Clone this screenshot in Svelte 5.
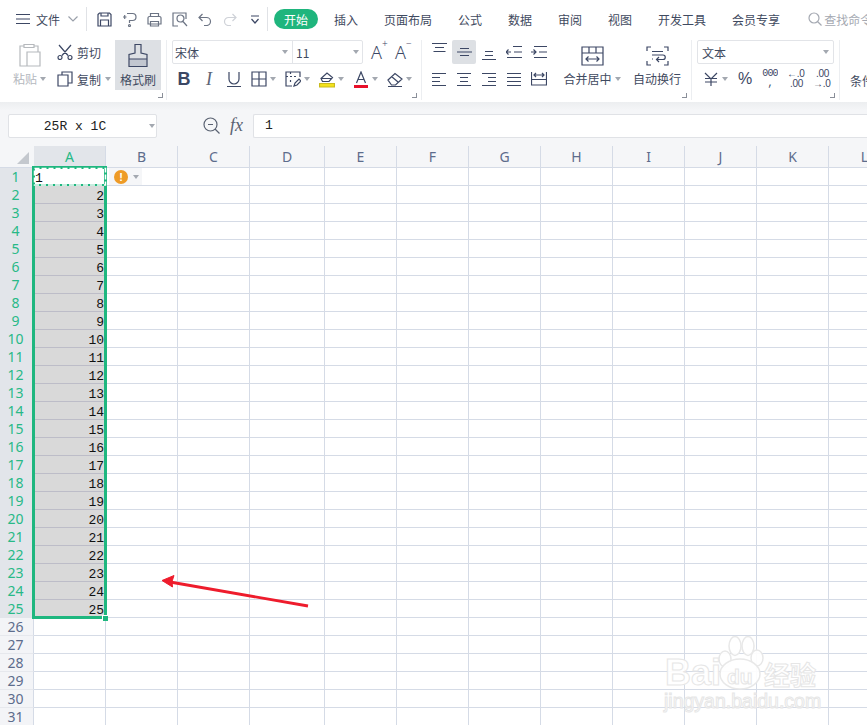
<script>
  const widths = [72, 72, 72, 75, 72, 72, 72, 72, 72, 72, 72, 72];
  const letters = 'ABCDEFGHIJKL'.split('');
  const rows = Array.from({ length: 31 }, (_, i) => i + 1);
  const tabs = ['插入', '页面布局', '公式', '数据', '审阅', '视图', '开发工具', '会员专享'];
</script>

<div class="app">
  <header class="tabs">
    <svg class="ham" width="14" height="12" viewBox="0 0 14 12"><path d="M0 1.500h14M0 6h14M0 10.500h14" /></svg>
    <span class="file">文件</span>
    <svg class="chev" width="10" height="6" viewBox="0 0 10 6"><path d="M.5.5 5 5 9.500.5" /></svg>
    <i class="tsep"></i>
    <div class="quick">
      <span class="q"><svg width="15" height="15" viewBox="0 0 15 15"><path d="M1 2.500 2.500 1h10L14 2.500V14H1zM3.500 14V8h8v6M4 1v3h7V1" /></svg></span>
      <span class="q"><svg width="15" height="15" viewBox="0 0 15 15" class="soft"><path d="M1 5h3.500M2.700 3v4M5 1.500h5.500a3.500 3.500 0 0 1 0 7H7.500v2.500M6.500 13.500a1 1 0 1 0 2 0 1 1 0 1 0-2 0" /></svg></span>
      <span class="q"><svg width="15" height="15" viewBox="0 0 15 15" class="soft"><path d="M3.500 4.500V1.500h8v3M1 12V6a1.500 1.500 0 0 1 1.500-1.500h10A1.500 1.500 0 0 1 14 6v6zM3.500 9.500h8V14h-8z" /></svg></span>
      <span class="q"><svg width="16" height="15" viewBox="0 0 16 15" class="soft"><path d="M6 14H1V1h13v6M5 6.500a3.500 3.500 0 1 0 7 0 3.500 3.500 0 1 0-7 0M11 9.500l4 4.500" /></svg></span>
      <span class="q"><svg width="14" height="13" viewBox="0 0 14 13" class="soft"><path d="M4.500 1 1 4.500 4.500 8M1 4.500h7.500a4 4 0 0 1 0 8H6" /></svg></span>
      <span class="q"><svg width="14" height="13" viewBox="0 0 14 13" class="faint"><path d="M9.500 1 13 4.500 9.500 8M13 4.500H5.500a4 4 0 0 0 0 8H8" /></svg></span>
      <span class="q"><svg width="10" height="9" viewBox="0 0 10 9"><path d="M1 1h8M1.500 4 5 8l3.500-4" /></svg></span>
    </div>
    <i class="tsep s2"></i>
    <span class="pill">开始</span>
    <nav>
      {#each tabs as t}<span>{t}</span>{/each}
    </nav>
    <div class="find">
      <svg width="14" height="14" viewBox="0 0 14 14"><path d="M1 6a5 5 0 1 0 10 0 5 5 0 1 0-10 0M9.500 9.500 13.500 13.500" /></svg>
      <span>查找命令</span>
    </div>
  </header>

  <section class="ribbon">
    <div class="grp g1">
      <div class="paste">
        <svg width="22" height="24" viewBox="0 0 22 24"><path d="M5 3H1v20h7M15 3h4v6M5 1.500h10v3H5zM8 9h13v14H8z" /></svg>
        <div class="dim">粘贴<b class="caret"></b></div>
      </div>
      <div class="cc">
        <div class="ccr">
          <svg width="16" height="16" viewBox="0 0 16 16"><path d="M2 1 11 11.500M14 1 5 11.500M1 13.500a2 2 0 1 0 4 0 2 2 0 1 0-4 0M11 13.500a2 2 0 1 0 4 0 2 2 0 1 0-4 0" /></svg>
          <span>剪切</span>
        </div>
        <div class="ccr">
          <svg width="16" height="16" viewBox="0 0 16 16"><path d="M5 4V1h10v11h-4M1 4h10v11H1z" /></svg>
          <span>复制</span><b class="caret"></b>
        </div>
      </div>
      <div class="brush">
        <svg width="20" height="25" viewBox="0 0 20 25"><path class="f" d="M1.500 16h17v8h-17z" /><path d="M7 10V1.500h6V10l6 1.500v12H1v-12zM1 16h18" /></svg>
        <span>格式刷</span>
      </div>
      <i class="launch"></i>
    </div>

    <div class="grp g2">
      <div class="row1">
        <div class="fontbox">
          <div class="ff"><span>宋体</span><b class="caret"></b></div>
          <div class="fs"><span>11</span><b class="caret"></b></div>
        </div>
        <span class="grow">A<sup>+</sup></span>
        <span class="grow">A<sup>−</sup></span>
      </div>
      <div class="row2 fmt">
        <span class="bold">B</span>
        <span class="ital">I</span>
        <svg width="16" height="16" viewBox="0 0 16 16"><path d="M3 1v7a5 5 0 0 0 10 0V1M1 15.500h14" /></svg>
        <svg width="16" height="16" viewBox="0 0 16 16"><path d="M1 1h14v14H1zM8 1v14M1 8h14" /></svg><b class="caret"></b>
        <svg width="16" height="16" viewBox="0 0 16 16"><path d="M15 6V1H1v14h6M1 5.500h2M5 5.500h2M9 5.500h2M5.500 1v2M5.500 9v2M9 15l1-3 4-4 2 2-4 4z" /></svg><b class="caret"></b>
        <svg width="16" height="17" viewBox="0 0 16 17"><path d="M2 7.500 8 2l5.500 4.500L10 10.500H3.500zM2 7.500h11" /><path class="y" d="M.5 12.500h15V16H.5z" /></svg><b class="caret"></b>
        <svg width="16" height="17" viewBox="0 0 16 17"><path d="M3.500 12 8 1l4.500 11M5 8.500h6" /><path class="r" d="M1 14h14v3H1z" /></svg><b class="caret"></b>
        <svg width="16" height="16" viewBox="0 0 16 16"><path d="M1 9 8 2.500 15 8l-6.500 6H4.500zM4.500 5.500 11 11M1 15.500h14" /></svg><b class="caret"></b>
      </div>
      <i class="launch"></i>
    </div>

    <div class="grp g3">
      <div class="aligns">
        <span><svg class="hi" width="15" height="12" viewBox="0 0 15 12"><path d="M0 .5h15M3 4.500h9M1.500 8.500h12" /></svg></span>
        <span class="on"><svg width="15" height="8" viewBox="0 0 15 8"><path d="M3 .5h9M0 4h15M3 7.500h9" /></svg></span>
        <span><svg width="14" height="12" viewBox="0 0 14 12" class="low"><path d="M3 3.500h8M3 7.500h8M0 11.500h14" /></svg></span>
        <span><svg width="16" height="12" viewBox="0 0 16 12"><path d="M0 6h5M2.500 3.500 0 6l2.500 2.500M7 .5h9M8 6h8M1 11.500h15" /></svg></span>
        <span><svg width="16" height="12" viewBox="0 0 16 12"><path d="M0 6h5M2.500 3.500 5 6 2.500 8.500M3 .5h13M8 6h8M3 11.500h13" /></svg></span>
        <span><svg width="14" height="13" viewBox="0 0 14 13"><path d="M0 .5h14M0 4.500h8M0 8.500h8M0 12.500h14" /></svg></span>
        <span><svg width="14" height="13" viewBox="0 0 14 13"><path d="M0 .5h14M3 4.500h8M3 8.500h8M0 12.500h14" /></svg></span>
        <span><svg width="14" height="13" viewBox="0 0 14 13"><path d="M0 .5h14M6 4.500h8M6 8.500h8M0 12.500h14" /></svg></span>
        <span><svg width="14" height="13" viewBox="0 0 14 13"><path d="M0 .5h14M0 4.500h14M0 8.500h14M0 12.500h14" /></svg></span>
        <span><svg width="16" height="14" viewBox="0 0 16 14"><path d="M.5 0v13.500M15.500 0v13.500M.5 13h15M.5 7.500h15M3 3h10M5 1 3 3l2 2M11 1l2 2-2 2" /></svg></span>
      </div>
      <div class="big merge">
        <svg width="23" height="20" viewBox="0 0 23 20"><path d="M1 1h21v18H1zM1 7h21M8 1v6M15 1v6M5 13h13M7.500 10.500 5 13l2.500 2.500M15.500 10.500 18 13l-2.500 2.500" /></svg>
        <div>合并居中<b class="caret"></b></div>
      </div>
      <div class="big wrap">
        <svg width="23" height="20" viewBox="0 0 23 20"><path d="M5 1H1v4M18 1h4v4M5 19H1v-4M18 19h4v-4M6 5.500h11M6 9h11a1.500 1.500 0 0 1 0 4.500h-6M13 11l-2.500 2.500L13 16M6 13h1" /></svg>
        <div>自动换行</div>
      </div>
      <i class="launch"></i>
    </div>

    <div class="grp g4">
      <div class="numbox"><span>文本</span><b class="caret"></b></div>
      <div class="nums">
        <svg class="yen" width="14" height="14" viewBox="0 0 14 14"><path d="M1 1l6 6 6-6M7 7v7M1 6.500h12M1 10h12" /></svg><b class="caret"></b>
        <span class="pct">%</span>
        <span class="thou"><em>000</em><em>,</em></span>
        <span class="dec"><em>←.0</em><em>.00</em></span>
        <span class="dec"><em>.00</em><em>→.0</em></span>
      </div>
      <i class="launch"></i>
    </div>

    <div class="grp g5"><span>条件</span></div>
  </section>

  <div class="strip"></div>

  <section class="formula">
    <div class="name"><span>25R x 1C</span><b class="caret"></b></div>
    <svg class="zoomi" width="17" height="17" viewBox="0 0 17 17"><path d="M1 7.500a6.500 6.500 0 1 0 13 0 6.500 6.500 0 1 0-13 0M12 12l4.500 4.500M5 7.500h5" /></svg>
    <span class="fx">fx</span>
    <div class="input">1</div>
  </section>

  <section class="sheet">
    <div class="hrow">
      <div class="corner"><i></i></div>
      {#each letters as l, i}
        <div class="ch" class:act={i === 0} style="width:{widths[i]}px">{l}</div>
      {/each}
    </div>
    {#each rows as r}
      <div class="drow">
        <div class="rh" class:act={r <= 25}>{r}</div>
        {#each widths as w, i}
          <div class="cell" class:sel={i === 0 && r > 1 && r <= 25} class:first={i === 0 && r === 1} style="width:{w}px">
            {#if i === 0 && r <= 25}{r}{/if}
          </div>
        {/each}
      </div>
    {/each}

    <div class="selection">
      <svg width="75" height="22" viewBox="0 0 75 22">
        <path class="ant-base" d="M2.500 19h71" />
        <rect x="2.500" y="2.500" width="71" height="16.500" class="dash" />
      </svg>
      <i class="handle"></i>
    </div>

    <div class="smart">
      <span class="warn">!</span><b class="caret"></b>
    </div>

    <svg class="arrow" width="160" height="40" viewBox="0 0 160 40">
      <path class="shaft" d="M150 31 12 7" />
      <path class="head" d="M4 5.500 16 .5l-2 6 .5 5.500z" />
    </svg>

    <svg class="mark" width="170" height="90" viewBox="0 0 170 90">
      <g class="paw">
        <ellipse cx="75" cy="16" rx="6" ry="9.500" />
        <ellipse cx="88" cy="16" rx="6" ry="9.500" />
        <ellipse cx="65" cy="29" rx="6" ry="8" />
        <ellipse cx="97" cy="28" rx="6" ry="8" />
        <ellipse cx="80" cy="44" rx="20" ry="15" />
      </g>
      <text x="5" y="55" class="t1">Bai</text>
      <text x="67" y="54" class="t2">du</text>
      <text x="104" y="55" class="t3">经验</text>
      <text x="4" y="78" class="t4">jingyan.baidu.com</text>
    </svg>
  </section>
</div>

<style>
  :global(body) { margin: 0; background: #fff; }
  .app {
    width: 867px; height: 725px; overflow: hidden; position: relative;
    font-family: "Noto Sans CJK SC", "Noto Sans", sans-serif;
    font-size: 12px; color: #3f4a60; background: #fff;
  }
  svg path, svg rect { fill: none; stroke: #3c4764; stroke-width: 1.200; }
  .caret {
    display: inline-block; width: 0; height: 0; vertical-align: middle; flex: none;
    border: 3px solid transparent; border-top: 4px solid #a3a8b0; border-bottom: 0;
  }

  .tabs { height: 38px; display: flex; align-items: center; padding-left: 16px; box-sizing: border-box; overflow: hidden; }
  .file { margin-left: 6px; width: 24px; flex: none; white-space: nowrap; }
  .chev { margin-left: 8px; flex: none; }
  .ham { flex: none; }
  .chev path { stroke: #9aa0aa; }
  .tsep { width: 1px; height: 24px; background: #e0e2e6; margin-left: 8px; flex: none; }
  .tsep.s2 { margin-left: 0; }
  .quick { display: flex; margin-left: 5px; flex: none; }
  .q { width: 25px; height: 20px; display: flex; align-items: center; justify-content: center; }
  .soft path { stroke: #6c7484; }
  .faint path { stroke: #cfd2d8; }
  .pill {
    margin-left: 6px; width: 44px; height: 20px; border-radius: 10px; background: #1fb57d; flex: none;
    color: #fff; display: flex; align-items: center; justify-content: center;
  }
  nav { display: flex; gap: 26px; margin-left: 16px; white-space: nowrap; flex: none; }
  .find { display: flex; align-items: center; gap: 2px; margin-left: 28px; color: #a5a9b2; white-space: nowrap; flex: none; }
  .find path { stroke: #a5a9b2; }

  .ribbon { height: 64px; display: flex; padding-top: 2px; box-sizing: border-box; }
  .grp { position: relative; border-right: 1px solid #eceef1; box-sizing: content-box; height: 60px; flex: none; }
  .launch {
    position: absolute; right: 4px; bottom: 2px; width: 4px; height: 4px;
    border-right: 1px solid #8a8f99; border-bottom: 1px solid #8a8f99;
  }

  .g1 { width: 166px; display: flex; }
  .paste { width: 57px; padding-left: 13px; box-sizing: border-box; color: #b4b8be; }
  .paste svg { display: block; margin: 3px 0 0 6px; }
  .paste svg path { stroke: #b6b9bd; }
  .dim { margin-top: 3px; white-space: nowrap; display: flex; align-items: center; gap: 3px; }
  .cc { width: 58px; }
  .ccr { height: 24px; display: flex; align-items: center; gap: 4px; margin-bottom: 3px; }
  .brush {
    width: 46px; height: 50px; background: #dde0e4; display: flex; flex-direction: column; align-items: center;
  }
  .brush svg { margin-top: 3px; }
  .brush path.f { fill: #c2c7d0; stroke: none; }
  .brush span { margin-top: 2px; line-height: 20px; }
  .g1 .launch { right: 3px; }

  .g2 { width: 254px; }
  .row1 { display: flex; align-items: center; height: 24px; }
  .fontbox {
    margin-left: 5px; width: 191px; height: 24px; box-sizing: border-box; border: 1px solid #e2e4e8; border-radius: 2px;
    display: flex; font-size: 12px;
  }
  .ff { width: 120px; border-right: 1px solid #e2e4e8; display: flex; align-items: center; justify-content: space-between; padding: 0 4px 0 2px; box-sizing: border-box; }
  .fs { flex: 1; display: flex; align-items: center; justify-content: space-between; padding: 0 3px 0 3px; }
  .grow { font-family: "Noto Sans", sans-serif; font-size: 18px; width: 24px; line-height: 24px; color: #3c4764; font-weight: 300; position: relative; }
  .grow:first-of-type { margin-left: 8px; }
  sup { font-size: 10px; position: absolute; left: 11px; top: -4px; line-height: 14px; }
  .row2 { display: flex; align-items: center; height: 24px; margin-top: 3px; }
  .fmt { gap: 9px; padding-left: 9px; }
  .fmt > svg, .fmt > span { width: 16px; flex: none; }
  .fmt .caret { margin-left: -6px; }
  .bold { font: 700 18px "Liberation Sans", sans-serif; text-align: center; color: #3c4764; }
  .ital { font: italic 18px "Liberation Serif", serif; text-align: center; color: #5d6577; }
  svg path.y { fill: #f4e21c; stroke: #c9bb20; }
  svg path.r { fill: #e8102a; stroke: none; }

  .g3 { width: 269px; display: flex; padding-left: 0; }
  .aligns { margin-left: 5px; width: 125px; display: grid; grid-template-columns: repeat(5, 25px); grid-auto-rows: 24px; row-gap: 3px; flex: none; }
  .aligns span { display: flex; align-items: center; justify-content: center; width: 24px; }
  .aligns .on { background: #dde0e4; border-radius: 2px; }
  .hi { transform: translateY(-3px); }
  .low { transform: translateY(2px); }
  .big { display: flex; flex-direction: column; align-items: center; white-space: nowrap; flex: none; }
  .big svg { margin-top: 6px; }
  .big div { margin-top: 3px; line-height: 20px; display: flex; align-items: center; gap: 3px; }
  .merge { width: 53px; margin-left: 12px; }
  .merge svg { margin-left: 4px; }
  .merge div { margin-left: 3px; }
  .wrap { width: 48px; margin-left: 16px; }

  .g4 { width: 147px; }
  .numbox {
    margin-left: 5px; width: 137px; height: 24px; box-sizing: border-box; border: 1px solid #e2e4e8; border-radius: 2px;
    display: flex; align-items: center; justify-content: space-between; padding: 0 4px;
  }
  .nums { display: flex; align-items: center; height: 24px; margin-top: 3px; padding-left: 12px; color: #3c4764; }
  .yen { flex: none; }
  .nums .caret { margin-left: 4px; }
  .pct { font: 16px "Liberation Sans", sans-serif; margin-left: 10px; width: 14px; text-align: center; }
  .thou { display: flex; flex-direction: column; font: 10px/10px "Liberation Mono", monospace; margin-left: 10px; width: 16px; text-align: center; letter-spacing: -.8px; height: 20px; overflow: hidden; }
  .dec { display: flex; flex-direction: column; width: 16px; font: 10px/10px "Liberation Sans", sans-serif; text-align: right; letter-spacing: -.3px; }
  .thou + .dec { margin-left: 9px; }
  .dec + .dec { margin-left: 10px; }
  .thou em, .dec em { font-style: normal; white-space: nowrap; }

  .g5 { border: 0; padding-left: 10px; }
  .g5 span { display: block; margin-top: 31px; line-height: 20px; white-space: nowrap; }

  .strip { height: 8px; background: linear-gradient(#eceef0, #f4f5f7); }
  .formula { height: 36px; background: #f5f6f8; display: flex; align-items: flex-start; padding-top: 4px; box-sizing: border-box; }
  .name {
    margin-left: 8px; width: 149px; height: 24px; box-sizing: border-box; background: #fff; border: 1px solid #e0e2e6; border-radius: 2px;
    display: flex; align-items: center; font: 13px "Liberation Mono", monospace; color: #222; padding-right: 1px;
  }
  .name span { flex: 1; text-align: center; margin-right: 8px; white-space: pre; }
  .zoomi { margin: 3px 0 0 46px; }
  .zoomi path { stroke: #5a6272; }
  .fx { font: italic 18px "Liberation Serif", serif; margin-left: 10px; width: 23px; color: #5a6272; line-height: 22px; }
  .input {
    flex: 1; height: 24px; box-sizing: border-box; background: #fff; border: 1px solid #e0e2e6; border-right: 0; border-radius: 2px 0 0 2px;
    font: 13px/22px "Liberation Mono", monospace; color: #222; padding-left: 11px;
  }

  .sheet { position: relative; }
  .hrow, .drow { display: flex; width: 930px; }
  .hrow { height: 22px; }
  .corner { width: 34px; background: #f5f6f8; border-right: 1px solid #f5f6f8; border-bottom: 1px solid #d5dbe6; box-sizing: border-box; position: relative; flex: none; }
  .corner i { position: absolute; right: 4px; bottom: 3px; border: 6px solid #c4c8ce; border-left-color: transparent; border-top-color: transparent; }
  .ch {
    flex: none; box-sizing: border-box; background: #f5f6f8; border-right: 1px solid #d5dbe6; border-bottom: 1px solid #d5dbe6;
    text-align: center; font: 14px/22px "Noto Sans", sans-serif; color: #5d6c8c;
  }
  .ch.act { background: #e2e5ea; color: #28b987; }
  .drow { height: 18px; }
  .rh {
    flex: none; width: 34px; box-sizing: border-box; background: #f3f4f7; border-right: 1px solid #d5dbe6; border-bottom: 1px solid #e6e8ed;
    text-align: center; font: 14px/18px "Noto Sans", sans-serif; color: #5d6c8c; padding-right: 2px;
  }
  .rh.act { background: #e2e5ea; color: #28b987; border-bottom-color: #e2e5ea; }
  .cell {
    flex: none; box-sizing: border-box; border-right: 1px solid #d5dbe6; border-bottom: 1px solid #d5dbe6;
    font: 13px/21px "Liberation Mono", monospace; color: #111; overflow: hidden;
  }
  .cell.sel { background: #d9d9d9; border-bottom-color: #bdbdc8; border-right-color: #d9d9d9; text-align: right; padding-right: 1px; }
  .cell.first { padding-left: 1px; }

  .selection {
    position: absolute; left: 32px; top: 20px; width: 75px; height: 453px; box-sizing: border-box;
    border: 3px solid #1fb77f;
  }
  .selection svg { position: absolute; left: -3px; top: -3px; }
  .selection svg path.ant-base { stroke: #1fb77f; stroke-width: 2; }
  .selection svg rect { stroke: #fff; stroke-width: 1.500; stroke-dasharray: 5 2; }
  .handle {
    position: absolute; right: -4px; bottom: -5px; width: 5px; height: 5px; background: #1fb77f;
    border-left: 1px solid #fff; border-top: 1px solid #fff;
  }

  .smart {
    position: absolute; left: 109px; top: 22px; width: 33px; height: 17px; background: #f5f6f8;
    display: flex; align-items: center; gap: 5px; padding-left: 5px; box-sizing: border-box;
  }
  .warn {
    width: 14px; height: 14px; border-radius: 50%; background: #ee9b26; color: #fff; flex: none;
    font: 700 11px/14px "Liberation Sans", sans-serif; text-align: center;
  }

  .arrow { position: absolute; left: 158px; top: 429px; }
  .arrow path.shaft { stroke: #ee1c2c; stroke-width: 2.800; }
  .arrow path.head { fill: #ee1c2c; stroke: #ee1c2c; stroke-width: 1; }

  .mark { position: absolute; left: 660px; top: 484px; }
  .paw ellipse { fill: rgba(255, 255, 255, .92); stroke: #e8e8e8; stroke-width: 1.500; }
  .mark text { fill: rgba(255, 255, 255, .95); stroke: #e6e6e6; stroke-width: 1; font-family: "Liberation Sans", sans-serif; }
  .t1 { font-size: 36px; font-weight: 700; }
  .t2 { font-size: 21px; font-weight: 700; }
  .t3 { font-size: 26px; font-weight: 700; font-family: "Noto Sans CJK SC", sans-serif !important; }
  .t4 { font-size: 19.500px; }
</style>
